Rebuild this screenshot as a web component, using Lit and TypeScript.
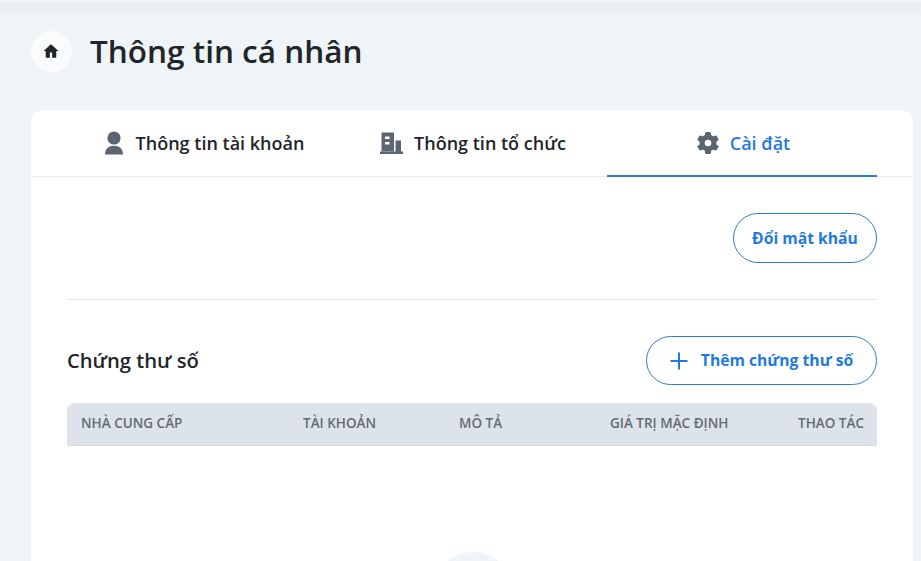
import { LitElement, html, css } from "lit";
import { customElement } from "lit/decorators.js";

@customElement("app-root")
export class AppRoot extends LitElement {
  static styles = css`
    :host {
      display: block;
      height: 561px;
      overflow: hidden;
      background: #eff4f7;
      font-family: "Open Sans", "Noto Sans", sans-serif;
      color: #212529;
    }
    .page {
      height: 561px;
      box-sizing: border-box;
      padding: 2px 8px 0 31px;
      display: flex;
      flex-direction: column;
    }
    .shade {
      height: 16px;
      margin: 0 -8px 0 -31px;
      background: linear-gradient(#e9edf0, #eff4f7);
      flex: none;
    }
    .title-row {
      display: flex;
      align-items: center;
      gap: 18px;
      height: 41px;
      margin-top: 13px;
      flex: none;
    }
    .home {
      width: 41px;
      height: 41px;
      border-radius: 50%;
      background: #f9fbfd;
      display: flex;
      align-items: center;
      justify-content: center;
    }
    .home svg {
      width: 18px;
      height: 18px;
      fill: #212529;
      margin: -1px 2px 0 0;
    }
    h1 {
      margin: -2px 0 0;
      font-size: 31.5px;
      font-weight: 600;
      line-height: 41px;
      color: #212529;
    }
    .card {
      margin-top: 38px;
      flex: 1;
      background: #fff;
      border-radius: 12px 12px 0 0;
      overflow: hidden;
    }
    .tabs {
      display: grid;
      grid-template-columns: repeat(3, 270px);
      padding: 0 36px;
      height: 67px;
      box-sizing: border-box;
      border-bottom: 1px solid #e9edf1;
    }
    .tab {
      height: 67px;
      box-sizing: border-box;
      display: flex;
      align-items: center;
      justify-content: center;
      gap: 10px;
      padding: 0 0 1px 2px;
      font-size: 18px;
      font-weight: 600;
      color: #212529;
    }
    .tab svg {
      width: 24px;
      height: 24px;
      fill: #5b6672;
      flex: none;
    }
    .tab.active {
      color: #1f7ae0;
      border-bottom: 2px solid #2c7cc9;
      padding-bottom: 0;
    }
    .body {
      padding: 36px 36px 0;
    }
    .actions {
      display: flex;
      justify-content: flex-end;
      padding-bottom: 36px;
      border-bottom: 1px solid #e1e5e9;
    }
    .btn {
      box-sizing: border-box;
      display: inline-flex;
      align-items: center;
      justify-content: center;
      gap: 10px;
      height: 50px;
      border: 1px solid #2c7cc9;
      border-radius: 25px;
      background: #fff;
      color: #1f7ae0;
      font: 700 15.7px "Open Sans", "Noto Sans", sans-serif;
      padding: 0;
    }
    .btn.change {
      width: 144px;
      padding-bottom: 1px;
    }
    .btn.add {
      width: 231px;
      height: 49px;
      padding: 0 3px 2px 0;
    }
    .btn svg {
      width: 24px;
      height: 24px;
      fill: none;
      stroke: #1f7ae0;
      stroke-width: 2;
      margin-top: 2px;
    }
    .section {
      display: flex;
      justify-content: space-between;
      align-items: center;
      margin-top: 36px;
    }
    h2 {
      margin: -2px 0 0;
      font-size: 20.2px;
      font-weight: 600;
      color: #212529;
    }
    .thead {
      margin-top: 18px;
      display: grid;
      grid-template-columns: 222px 156px 151px 188px auto;
      align-items: center;
      padding: 0 0 3px 14px;
      background: #dde3ea;
      border-radius: 8px 8px 0 0;
      border-bottom: 1px solid #d5dbe2;
      box-sizing: border-box;
      height: 43px;
      font-size: 13.5px;
      font-weight: 600;
      color: #636b74;
      white-space: nowrap;
    }
    .empty {
      width: 80px;
      height: 80px;
      border-radius: 50%;
      background: #f0f4f8;
      margin: 106px auto 0;
      position: relative;
      left: 1px;
    }
  `;

  render() {
    return html`
      <div class="page">
        <div class="shade"></div>
        <div class="title-row">
          <div class="home">
            <svg viewBox="0 0 24 24"><path fill-rule="evenodd" d="M12 3 2 12h3v9h14v-9h3L12 3Zm-1.500 11h3v7h-3v-7Z" /></svg>
          </div>
          <h1>Thông tin cá nhân</h1>
        </div>
        <div class="card">
          <div class="tabs">
            <div class="tab">
              <svg viewBox="0 0 24 24"><circle cx="12" cy="7" r="6.600" /><path d="M3 23.500c0-5.500 3.600-8.800 9-8.800s9 3.300 9 8.800H3Z" /></svg>
              <span>Thông tin tài khoản</span>
            </div>
            <div class="tab">
              <svg viewBox="1 0 24 24">
                <path fill-rule="evenodd" d="M2.500 1.500h12.500v19H2.500v-19ZM6 5.500v2.500h4.500V5.500H6Zm0 5.500v2.500h4.500V11H6Z" />
                <path d="M16.500 9.500h5.500v11h-5.500zM1 20.500h23v2.500H1z" />
              </svg>
              <span>Thông tin tổ chức</span>
            </div>
            <div class="tab active">
              <svg viewBox="0 0 24 24">
                <circle cx="12" cy="12" r="8.500" />
                <rect x="9" y="1" width="6" height="22" rx="1.500" />
                <rect x="9" y="1" width="6" height="22" rx="1.500" transform="rotate(60 12 12)" />
                <rect x="9" y="1" width="6" height="22" rx="1.500" transform="rotate(120 12 12)" />
                <circle cx="12" cy="12" r="3.300" fill="#fff" />
              </svg>
              <span>Cài đặt</span>
            </div>
          </div>
          <div class="body">
            <div class="actions">
              <button class="btn change">Đổi mật khẩu</button>
            </div>
            <div class="section">
              <h2>Chứng thư số</h2>
              <button class="btn add">
                <svg viewBox="0 0 24 24"><path d="M12 3.500v17M3.500 12h17" /></svg>
                <span>Thêm chứng thư số</span>
              </button>
            </div>
            <div class="thead">
              <span>NHÀ CUNG CẤP</span>
              <span>TÀI KHOẢN</span>
              <span>MÔ TẢ</span>
              <span>GIÁ TRỊ MẶC ĐỊNH</span>
              <span>THAO TÁC</span>
            </div>
            <div class="empty"></div>
          </div>
        </div>
      </div>
    `;
  }
}
